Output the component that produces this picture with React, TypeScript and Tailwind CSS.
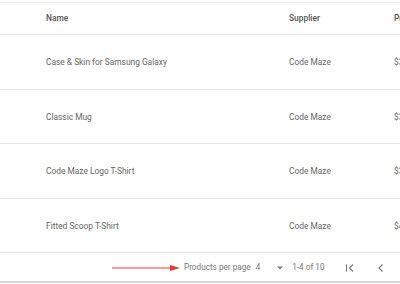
const products = [
  { name: 'Case & Skin for Samsung Galaxy', supplier: 'Code Maze', price: '$35.99' },
  { name: 'Classic Mug', supplier: 'Code Maze', price: '$30.00' },
  { name: 'Code Maze Logo T-Shirt', supplier: 'Code Maze', price: '$35.00' },
  { name: 'Fitted Scoop T-Shirt', supplier: 'Code Maze', price: '$45.00' },
]

export default function App() {
  return (
    <div
      className="h-[284px] w-[400px] overflow-hidden bg-white"
      style={{ fontFamily: 'Roboto, "Liberation Sans", sans-serif' }}
    >
      <div className="w-[520px] pt-[2px]">
        <div className="border-t border-[#f0f0f0]">
          <div className="flex h-[32px] items-center border-b border-[#e6e6e6] text-[8.4px] font-medium text-[#555]">
            <div className="w-[289px] pl-[46px]">Name</div>
            <div className="w-[105px]">Supplier</div>
            <div>Price</div>
          </div>
          {products.map((p) => (
            <div
              key={p.name}
              className="flex h-[54.5px] items-center border-b border-[#e6e6e6] pt-[2px] text-[8.4px] text-[#666]"
            >
              <div className="w-[289px] pl-[46px]">{p.name}</div>
              <div className="w-[105px]">{p.supplier}</div>
              <div>{p.price}</div>
            </div>
          ))}
        </div>
        <div className="flex h-[30px] items-center border-b-2 border-[#d6d6d6] pt-[1px] text-[8.2px] text-[#777]">
          <svg className="ml-[112px]" width="68" height="8" viewBox="0 0 68 8">
            <line x1="0" y1="4" x2="62" y2="4" stroke="#e53935" strokeWidth="1.2" />
            <polygon points="58,1 68,4 58,7" fill="#e53935" />
          </svg>
          <span className="ml-[4px]">Products per page</span>
          <span className="ml-[5px]">4</span>
          <svg className="ml-[17px]" width="6" height="4" viewBox="0 0 6 4">
            <polygon points="0,0.5 6,0.5 3,3.5" fill="#777" />
          </svg>
          <span className="ml-[9px]">1-4 of 10</span>
          <svg className="ml-[21px]" width="10" height="10" viewBox="0 0 10 10">
            <line x1="1.5" y1="1.5" x2="1.5" y2="8.5" stroke="#777" strokeWidth="1.1" />
            <polyline points="8,1.5 4.5,5 8,8.5" fill="none" stroke="#777" strokeWidth="1.1" />
          </svg>
          <svg className="ml-[21px]" width="10" height="10" viewBox="0 0 10 10">
            <polyline points="6.5,1.5 3,5 6.5,8.5" fill="none" stroke="#777" strokeWidth="1.1" />
          </svg>
          <svg className="ml-[21px]" width="10" height="10" viewBox="0 0 10 10">
            <polyline points="3.5,1.5 7,5 3.5,8.5" fill="none" stroke="#777" strokeWidth="1.1" />
          </svg>
        </div>
      </div>
    </div>
  )
}
